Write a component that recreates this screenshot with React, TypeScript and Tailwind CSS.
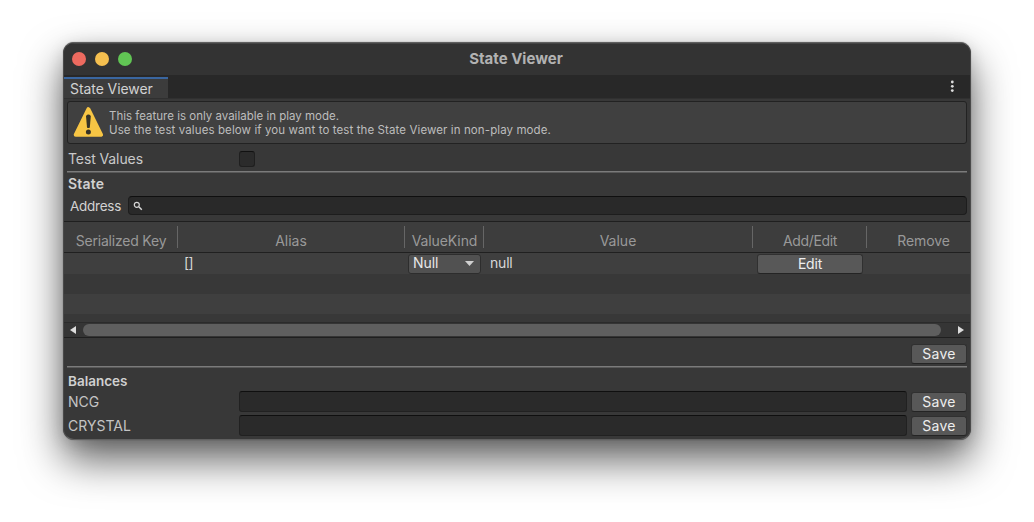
import React from "react";

const SaveButton = () => (
  <button className="flex h-5 w-14 shrink-0 items-center justify-center rounded-[3px] border border-[#303030] border-b-[#242424] bg-[#585858] text-[14px] leading-none tracking-[0.3px] text-[#eeeeee]">
    Save
  </button>
);

const BalanceRow = ({ label }: { label: string }) => (
  <div className="flex h-6 shrink-0 items-center pr-[3px] pl-1">
    <label className="w-[171px] shrink-0 pb-px text-[14px] text-[#c4c4c4]">{label}</label>
    <div className="mr-1 mb-px h-[21px] flex-1 rounded-[3px] border border-[#212121] border-t-[#0f0f0f] bg-[#2a2a2a]" />
    <SaveButton />
  </div>
);

const Divider = () => <div className="mr-[3px] ml-[3px] h-[2px] shrink-0 border-b border-[#595959] bg-[#7b7b7b]" />;

const columns = [
  { name: "Serialized Key", className: "w-[114px] pl-px tracking-[-0.2px]" },
  { name: "Alias", className: "w-[227px]" },
  { name: "ValueKind", className: "w-[79px] pl-px tracking-[-0.1px]" },
  { name: "Value", className: "w-[269px]" },
  { name: "Add/Edit", className: "w-[114px] pl-px tracking-[-0.35px]" },
];

export default function App() {
  return (
    <div className="h-[522px] w-[1034px] overflow-hidden bg-white px-[63px] pt-[42px] font-['Inter',sans-serif]">
      <main className="flex h-[398px] w-[908px] flex-col overflow-hidden rounded-[11px] border border-[#5f5f5f] border-x-[#4a4a4a] bg-[#383838] text-[#c9c9c9] shadow-[0_0_1px_rgba(0,0,0,0.5),0_20px_42px_rgba(0,0,0,0.62),0_4px_16px_rgba(0,0,0,0.12)]">
        <header className="grid h-8 shrink-0 grid-cols-[1fr_auto_1fr] items-center bg-[#333333] shadow-[inset_0_1px_0_#454545]">
          <div className="flex gap-[9px] pl-[8px]">
            <span className="size-[14px] rounded-full bg-[#ed6a5f]" />
            <span className="size-[14px] rounded-full bg-[#f5bf4f]" />
            <span className="size-[14px] rounded-full bg-[#61c554]" />
          </div>
          <h1 className="mr-[2px] pb-px text-[15px] leading-none font-bold text-[#b2b2b2]">State Viewer</h1>
        </header>

        <nav className="flex h-6 shrink-0 items-end justify-between border-b border-[#303030] bg-[#282828]">
          <div className="flex h-[21px] w-[104px] items-center border-t-2 border-[#3a66a0] bg-[#3c3c3c] pl-[6px] text-[14px] tracking-[-0.07px] text-[#d2d2d2]">
            State Viewer
          </div>
          <svg className="mr-[13px] mb-[5px]" width="10" height="14" viewBox="0 0 10 14" fill="#dddddd">
            <circle cx="5.3" cy="3" r="1.4" />
            <circle cx="5.3" cy="7.3" r="1.4" />
            <circle cx="5.3" cy="11.6" r="1.4" />
          </svg>
        </nav>

        <section className="mx-[3px] mt-[2px] flex h-[43px] shrink-0 items-center rounded-[3px] border border-[#222222] bg-[#404040] pl-[4px]">
          <svg className="mb-[2px]" width="32" height="32" viewBox="0 0 32 32">
            <path d="M16.4 3.2 L29.1 28.8 H3.7 Z" fill="#f7c544" stroke="#f7c544" strokeWidth="4" strokeLinejoin="round" />
            <path d="M14 10 Q16.4 7.2 18.8 10 L17.8 21.4 Q16.4 22.6 15 21.4 Z" fill="#353227" />
            <circle cx="16.4" cy="26" r="2.5" fill="#353227" />
          </svg>
          <p className="ml-[5px] text-[11.5px] leading-[14px] tracking-[0.1px] whitespace-nowrap text-[#bdbdbd]">
            <span className="tracking-[0px]">This feature is only available in play mode.</span>
            <br />
            Use the test values below if you want to test the State Viewer in non-play mode.
          </p>
        </section>

        <div className="flex h-[27px] shrink-0 items-center pt-[3px] pl-1">
          <label className="w-[171px] pb-[2px] text-[14px] tracking-[-0.1px]">Test Values</label>
          <span className="size-4 rounded-[3px] border border-[#1f1f1f] border-t-[#111111] bg-[#2b2b2b]" />
        </div>
        <Divider />
        <h2 className="flex h-[22px] shrink-0 items-center pb-[2px] pl-1 text-[14px] font-semibold tracking-[0.2px] text-[#d0d0d0]">State</h2>
        <div className="flex h-[26px] shrink-0 pt-[1px] pr-[3px] pl-[6px]">
          <label className="flex h-5 w-[58px] items-center pt-px text-[13.5px] tracking-[-0.25px] text-[#d2d2d2]">Address</label>
          <div className="flex h-[19px] flex-1 items-center rounded-[4px] border border-[#1d1d1d] border-t-[#0f0f0f] bg-[#292929] pl-[4px]">
            <svg width="10" height="10" viewBox="0 0 10 10" fill="none" stroke="#d8d8d8" strokeWidth="1.2">
              <circle cx="3.8" cy="3.8" r="2.5" />
              <path d="M5.8 5.8 L8.8 8.8" strokeWidth="1.5" />
            </svg>
          </div>
        </div>

        <section className="flex h-[117px] shrink-0 flex-col overflow-hidden border-y border-[#1f1f1f]">
          <div className="flex h-[31px] shrink-0 border-b border-[#202020] bg-[#3d3d3d] pt-1 text-[14px] text-[#999999]">
            {columns.map((c) => (
              <div key={c.name} className={`${c.className} mb-1 flex shrink-0 items-end justify-center border-r border-[#666666]`}>
                <span className="-mb-px leading-[17px]">{c.name}</span>
              </div>
            ))}
            <div className="mb-1 flex w-[113px] shrink-0 items-end justify-center tracking-[-0.1px]">
              <span className="-mb-px leading-[17px]">Remove</span>
            </div>
          </div>
          <div className="flex h-[21px] shrink-0 items-center bg-[#3f3f3f] text-[14px] text-[#d8d8d8]">
            <span className="w-[344px] pb-[2px] pl-[120px] tracking-[-0.5px]">[]</span>
            <button className="flex h-5 w-[73px] items-center justify-between rounded-[3px] border border-[#2d2d2d] bg-[#515151] pr-[6px] pl-1 leading-none tracking-[-0.1px] text-[#e8e8e8]">
              <span className="pb-px">Null</span>
              <svg width="9" height="5" viewBox="0 0 9 5" fill="#d0d0d0">
                <path d="M0 0 H9 L4.5 5 Z" />
              </svg>
            </button>
            <span className="w-[276px] pb-[2px] pl-[9px] tracking-[-0.2px]">null</span>
            <button className="h-5 w-[106px] rounded-[3px] border border-[#303030] border-b-[#242424] bg-[#585858] leading-none tracking-[-0.2px] text-[#eeeeee]">Edit</button>
          </div>
          <div className="h-5 shrink-0 bg-[#383838]" />
          <div className="h-5 shrink-0 bg-[#3f3f3f]" />
          <div className="h-[8px] shrink-0 bg-[#383838]" />
          <div className="flex flex-1 items-center border-t border-[#2b2b2b] bg-[#353535] pr-[6px] pl-[6px]">
            <svg width="6" height="8" viewBox="0 0 6 8" fill="#dddddd"><path d="M6 0 V8 L0 4 Z" /></svg>
            <div className="mr-[17px] ml-[7px] h-3 flex-1 rounded-full bg-[#5f5f5f]" />
            <svg width="6" height="8" viewBox="0 0 6 8" fill="#dddddd"><path d="M0 0 V8 L6 4 Z" /></svg>
          </div>
        </section>

        <div className="flex h-[28px] shrink-0 items-end justify-end pr-[3px] pb-[2px]">
          <SaveButton />
        </div>
        <Divider />
        <h2 className="flex h-[22px] shrink-0 items-center pt-[5px] pl-1 text-[13.5px] font-semibold text-[#d0d0d0]">Balances</h2>
        <BalanceRow label="NCG" />
        <BalanceRow label="CRYSTAL" />
      </main>
    </div>
  );
}
